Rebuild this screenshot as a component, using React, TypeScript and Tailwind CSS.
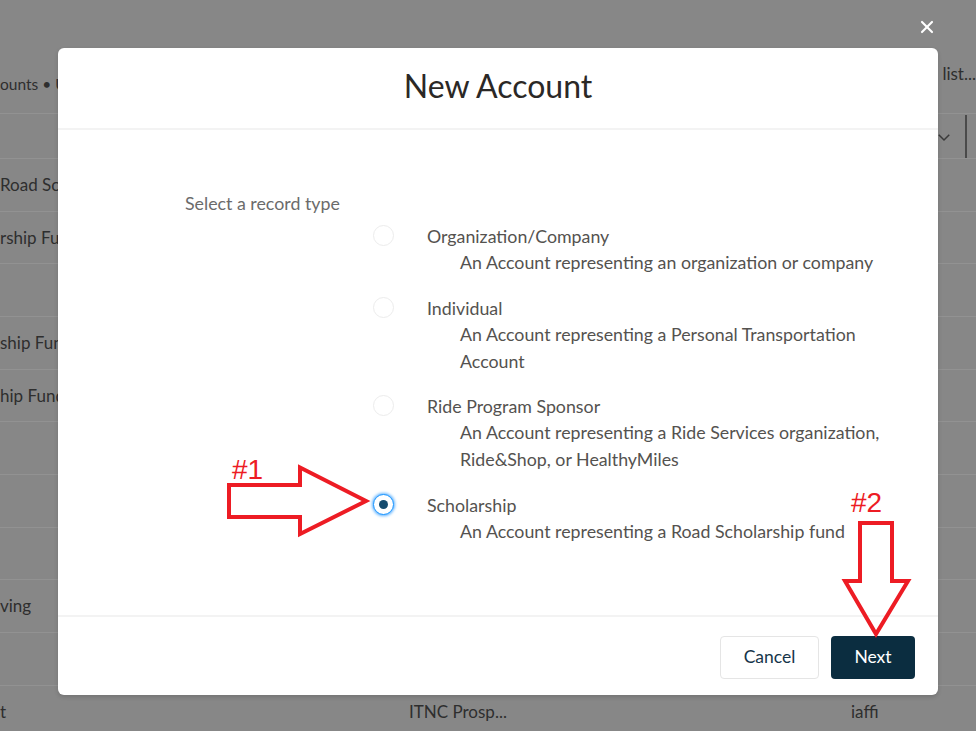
import { X } from 'lucide-react'

const options = [
  { label: 'Organization/Company', desc: 'An Account representing an organization or company', checked: false },
  { label: 'Individual', desc: 'An Account representing a Personal Transportation Account', checked: false },
  {
    label: 'Ride Program Sponsor',
    desc: 'An Account representing a Ride Services organization, Ride&Shop, or HealthyMiles',
    checked: false,
  },
  { label: 'Scholarship', desc: 'An Account representing a Road Scholarship fund', checked: true },
]

const rows = [
  'Road Scholarship Fund',
  'rship Fund',
  '',
  'ship Fund',
  'hip Fund',
  '',
  '',
  '',
  'ving',
  '',
]

function Radio({ checked }: { checked: boolean }) {
  if (checked) {
    return (
      <span className="mt-[2px] flex h-[21px] w-[21px] shrink-0 items-center justify-center rounded-full border border-[#1b96ff] bg-white shadow-[0_0_3px_1px_#62b4ff]">
        <span className="h-[9px] w-[9px] rounded-full bg-[#144b6e]"></span>
      </span>
    )
  }
  return <span className="mt-[2px] h-[21px] w-[21px] shrink-0 rounded-full border border-[#ececec] bg-white"></span>
}

export default function App() {
  return (
    <div className="relative h-[731px] w-[976px] overflow-hidden bg-[#878787] font-['Lato','Open_Sans',sans-serif] text-[17px] text-[#2e2e2e]">
      {/* List page behind the overlay */}
      <div className="flex h-[114px] border-b border-[#929292]">
        <div className="pt-[72px] text-[15.5px] leading-[24px]">ounts • Updated</div>
        <div className="ml-auto pt-[62px] leading-[24px]">list...</div>
      </div>
      <div className="flex h-[45px] items-center justify-end border-b border-[#929292]">
        <svg width="18" height="18" viewBox="0 0 24 24" fill="none" stroke="#3a3a3a" strokeWidth="2" className="mr-[12px] mt-[1px]">
          <path d="m5 9 7 7 7-7" />
        </svg>
        <div className="mr-[9px] h-[43px] w-[2px] bg-[#4a4a4a]"></div>
      </div>
      {rows.map((r, i) => (
        <div key={i} className="flex h-[52.67px] items-center border-b border-[#929292]">
          <span>{r}</span>
        </div>
      ))}
      <div className="flex h-[52.67px] items-center">
        <span className="w-[409px]">t</span>
        <span className="w-[442px]">ITNC Prosp...</span>
        <span>iaffi</span>
      </div>

      {/* Close */}
      <button className="absolute left-[917px] top-[17px] text-white">
        <X size={20} strokeWidth={2.6} />
      </button>

      {/* Modal */}
      <div className="absolute left-[58px] top-[48px] flex h-[647px] w-[880px] flex-col rounded-[6px] bg-white shadow-[0_2px_4px_rgba(0,0,0,0.15)]">
        <div className="flex h-[82px] shrink-0 items-center justify-center border-b-2 border-[#f3f3f3]">
          <h2 className="mt-[-4px] text-[32px] leading-[36px] text-[#2b2826]">New Account</h2>
        </div>

        <div className="flex-1 pt-[61px]">
          <p className="pl-[127px] text-[17.8px] leading-[24px] text-[#6b6b6b]">Select a record type</p>
          <div className="ml-[315px] mt-[8px] flex flex-col gap-[18.5px]">
            {options.map((o) => (
              <div key={o.label} className="flex items-start">
                <Radio checked={o.checked} />
                <div className="ml-[33px] text-[17.8px] text-[#54524f]">
                  <div className="leading-[26px]">{o.label}</div>
                  <div className="ml-[33px] max-w-[440px] leading-[27px]">{o.desc}</div>
                </div>
              </div>
            ))}
          </div>
        </div>

        <div className="flex h-[80px] shrink-0 items-center justify-end gap-[12px] border-t-2 border-[#f3f3f3] pr-[23px] pt-[2px]">
          <button className="h-[43px] w-[99px] rounded-[4px] border border-[#e5e5e5] bg-white text-[17.5px] text-[#16354a]">
            Cancel
          </button>
          <button className="h-[43px] w-[84px] rounded-[4px] bg-[#0b2d40] text-[17.5px] text-white">Next</button>
        </div>
      </div>

      {/* Annotations */}
      <svg className="pointer-events-none absolute left-0 top-0" width="976" height="731">
        <path d="M229 485 L300 485 L300 467.5 L366 501 L300 534 L300 517 L229 517 Z" fill="none" stroke="#ed1c24" strokeWidth="4" />
        <path d="M860 523 L892 523 L892 581 L908 581 L876 634 L845 581 L860 581 Z" fill="none" stroke="#ed1c24" strokeWidth="4" />
      </svg>
      <span className="pointer-events-none absolute left-[232px] top-[456px] font-['Liberation_Sans',sans-serif] text-[28px] leading-none text-[#ed1c24]">
        #1
      </span>
      <span className="pointer-events-none absolute left-[851px] top-[489px] font-['Liberation_Sans',sans-serif] text-[28px] leading-none text-[#ed1c24]">
        #2
      </span>
    </div>
  )
}
